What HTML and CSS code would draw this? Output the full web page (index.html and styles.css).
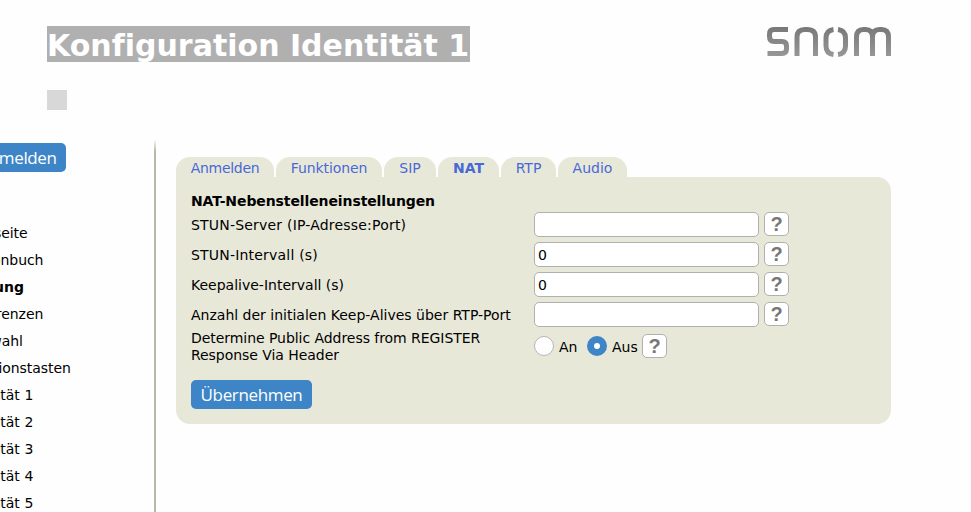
FILE: index.html
```html
<!DOCTYPE html>
<html lang="de">

<head>
  <meta charset="UTF-8">
  <title>Konfiguration Identität 1</title>
  <link rel="stylesheet" href="styles.css">
</head>

<body>
  <header>
    <div>
      <h1><span>Konfiguration Identität 1</span></h1>
      <div class="marker"></div>
    </div>
    <svg class="logo" width="126" height="32" viewBox="0 0 126 32" role="img" aria-label="snom">
      <defs>
        <linearGradient id="grey" gradientUnits="userSpaceOnUse" x1="0" y1="0" x2="0" y2="32">
          <stop offset="0" stop-color="#777"/>
          <stop offset="1" stop-color="#999"/>
        </linearGradient>
      </defs>
      <g fill="none" stroke="url(#grey)" stroke-width="5">
        <path d="M22 3.500H8Q3.500 3.500 3.500 8V10.500Q3.500 15.500 8 15.500H16Q20.500 15.500 20.500 20V23Q20.500 27.500 16 27.500H1.500"/>
        <path d="M31 30V11Q31 3.500 39 3.500H41Q49.500 3.500 49.500 11V30"/>
        <path d="M67.500 3.500Q60 4.500 60 12V20Q60 27.500 67.500 28.500"/>
        <path d="M72 3.500Q79.500 4.500 79.500 12V20Q79.500 27.500 72 28.500"/>
        <path d="M90.500 30V11Q90.500 3.500 97.500 3.500H99.500Q106.500 3.500 106.500 11V30M106.500 11Q106.500 3.500 113.500 3.500H115.500Q122.500 3.500 122.500 11V30"/>
      </g>
    </svg>
  </header>

  <div class="page">
    <nav class="sidebar">
      <button class="btn">Abmelden</button>
      <ul>
        <li>Startseite</li>
        <li>Telefonbuch</li>
        <li class="heading">Einstellung</li>
        <li>Präferenzen</li>
        <li>Kurzwahl</li>
        <li>Funktionstasten</li>
        <li class="identity">Identität 1</li>
        <li class="identity">Identität 2</li>
        <li class="identity">Identität 3</li>
        <li class="identity">Identität 4</li>
        <li class="identity">Identität 5</li>
      </ul>
    </nav>

    <main>
      <div class="tabs">
        <a class="tab-anmelden">Anmelden</a>
        <a class="tab-funktionen">Funktionen</a>
        <a class="tab-sip">SIP</a>
        <a class="tab-nat active">NAT</a>
        <a class="tab-rtp">RTP</a>
        <a class="tab-audio">Audio</a>
      </div>
      <form class="panel">
        <h2>NAT-Nebenstelleneinstellungen</h2>
        <div class="row">
          <label class="wide" for="stun-server">STUN-Server (IP-Adresse:Port)</label>
          <input type="text" id="stun-server">
          <span class="help">?</span>
        </div>
        <div class="row">
          <label class="wide" for="stun-interval">STUN-Intervall (s)</label>
          <input type="text" id="stun-interval" value="0">
          <span class="help">?</span>
        </div>
        <div class="row">
          <label for="keepalive">Keepalive-Intervall (s)</label>
          <input type="text" id="keepalive" value="0">
          <span class="help">?</span>
        </div>
        <div class="row">
          <label for="rtp-keepalive">Anzahl der initialen Keep-Alives über RTP-Port</label>
          <input type="text" id="rtp-keepalive">
          <span class="help">?</span>
        </div>
        <div class="row last">
          <label>Determine Public Address from REGISTER Response Via Header</label>
          <input type="radio" name="via" id="via-on">
          <label class="choice on" for="via-on">An</label>
          <input type="radio" name="via" id="via-off" checked>
          <label class="choice" for="via-off">Aus</label>
          <span class="help">?</span>
        </div>
        <button class="btn" type="button">Übernehmen</button>
      </form>
    </main>
  </div>
</body>

</html>
```

FILE: styles.css
```css
body {
  margin: 0;
  height: 512px;
  overflow: hidden;
  background-color: #fefefe;
  color: #000;
  font-family: Verdana, "DejaVu Sans", sans-serif;
  font-size: 14px;
}

/* Header */
header {
  display: flex;
  justify-content: space-between;
  width: 845px;
  height: 114px;
  padding: 26px 0 0 47px;
}

h1 {
  margin: 0;
  height: 36px;
  font-size: 30px;
  line-height: 40px;
  color: #fff;
  font-variant-ligatures: none;
}

h1 span {
  display: block;
  width: 423px;
  height: 36px;
  background-color: #b0b0b0;
  white-space: nowrap;
}

.marker {
  width: 20px;
  height: 20px;
  margin-top: 28px;
  background-color: #d8d8d8;
}

.logo {
  display: block;
}

.page {
  display: flex;
}

/* Sidebar */
.sidebar {
  flex: none;
  width: 216px;
  height: 372px;
  margin-left: -60px;
  padding-top: 3px;
  box-sizing: border-box;
  border-right: 2px solid;
  border-image: linear-gradient(#fefefe, #b9b9aa 12px) 1;
}

.sidebar ul {
  margin: 48px 0 0;
  padding: 0 0 0 20px;
  list-style: none;
}

.sidebar li {
  height: 27px;
  line-height: 27px;
  letter-spacing: -0.05px;
}

.sidebar .identity {
  letter-spacing: 0.05px;
}

.sidebar .heading {
  margin-left: -24px;
  font-weight: bold;
}

.btn {
  display: block;
  height: 29px;
  padding: 0;
  border: none;
  border-radius: 5px;
  background-color: #3d85c6;
  color: #fff;
  font-family: "Open Sans", sans-serif;
  font-size: 17px;
  letter-spacing: -0.35px;
  line-height: 29px;
}

.sidebar .btn {
  width: 106px;
  margin-left: 20px;
  padding-left: 9px;
}

/* Tabs */
main {
  width: 715px;
  padding: 17px 0 0 20px;
}

.tabs {
  display: flex;
  gap: 2px;
  height: 20px;
}

.tabs a {
  border-radius: 14px 14px 0 0;
  background-color: #e8e8d9;
  color: #4869d6;
  line-height: 23px;
  text-align: center;
}

.tab-anmelden {
  width: 98px;
  letter-spacing: -0.3px;
}

.tab-funktionen {
  width: 106px;
  letter-spacing: -0.1px;
}

.tab-sip {
  width: 52px;
}

.tab-nat {
  width: 61px;
}

.tab-rtp {
  width: 55px;
}

.tab-audio {
  width: 69px;
}

.tabs .active {
  font-weight: bold;
}

/* Settings form */
.panel {
  height: 247px;
  padding: 16px 15px 0;
  box-sizing: border-box;
  border-radius: 0 14px 14px 14px;
  background-color: #e8e8d9;
}

h2 {
  margin: 0;
  height: 16px;
  font-size: 14px;
  line-height: 17px;
  letter-spacing: -0.1px;
}

.row {
  display: flex;
  align-items: center;
  height: 30px;
}

.row label {
  flex: none;
  padding-top: 2px;
}

.row > label:first-child {
  width: 343px;
  line-height: 17px;
}

.row .wide {
  letter-spacing: 0.2px;
}

.row input[type="text"] {
  width: 225px;
  height: 25px;
  margin: 0 5px 0 0;
  padding: 1px 3px 0;
  box-sizing: border-box;
  border: 1px solid #b0b0b0;
  border-radius: 5px;
  background-color: #fff;
  font: inherit;
}

.help {
  flex: none;
  width: 25px;
  height: 24px;
  box-sizing: border-box;
  border: 1px solid #b0b0b0;
  border-radius: 5px;
  background-color: #fff;
  color: #777;
  font-family: "Liberation Sans", sans-serif;
  font-size: 20px;
  font-weight: bold;
  line-height: 23px;
  text-align: center;
}

.last {
  height: 34px;
}

.last > label:first-child {
  letter-spacing: -0.05px;
}

.row input[type="radio"] {
  flex: none;
  width: 20px;
  height: 20px;
  margin: 0;
  box-sizing: border-box;
  border: 1px solid #b5b5b5;
  border-radius: 50%;
  background-color: #fff;
  appearance: none;
}

.row input[type="radio"]:checked {
  border: 7px solid #3d85c6;
}

.row .choice {
  width: 35px;
  padding-left: 5px;
  box-sizing: border-box;
}

.row .choice.on {
  width: 33px;
}

.panel .btn {
  width: 121px;
  margin-top: 17px;
}
```
